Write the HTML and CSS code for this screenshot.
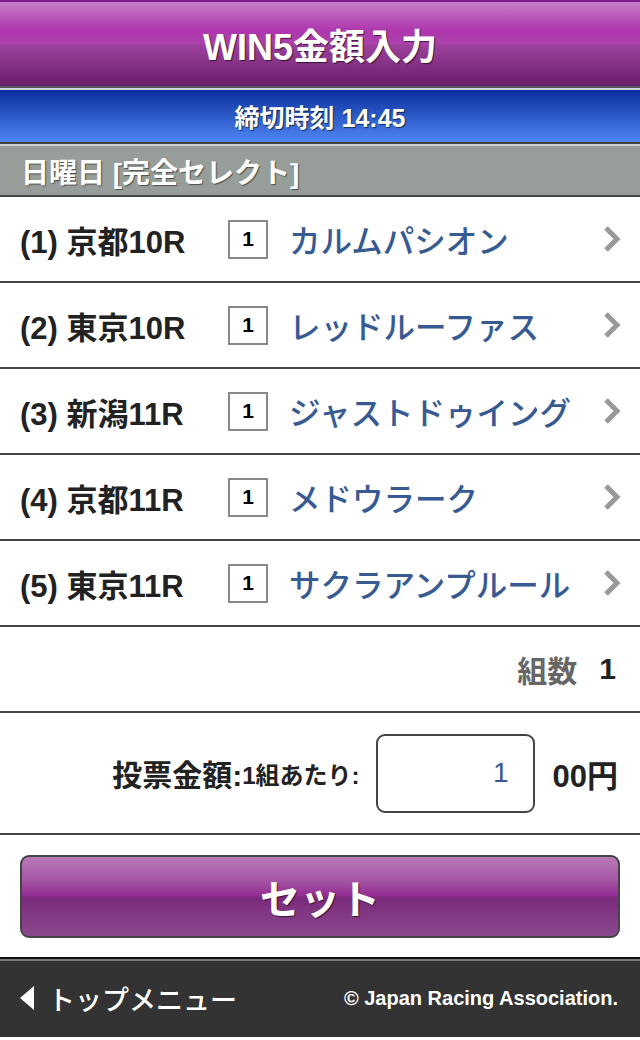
FILE: index.html
```html
<!DOCTYPE html>
<html lang="ja">
<head>
  <meta charset="UTF-8">
  <meta name="viewport" content="width=device-width, initial-scale=1.0">
  <title>WIN5金額入力</title>
  <link rel="stylesheet" href="styles.css">
</head>
<body>
  <header class="title-bar">
    <h1>WIN5金額入力</h1>
  </header>
  <div class="deadline">締切時刻 14:45</div>
  <div class="day-bar">日曜日 [完全セレクト]</div>

  <ul class="races">
    <li class="race">
      <span class="race-label">(1) 京都10R</span>
      <span class="pick">1</span>
      <span class="horse">カルムパシオン</span>
      <svg class="chev" width="20" height="28" viewBox="0 0 20 28"><polyline points="4,3 15,14 4,25" /></svg>
    </li>
    <li class="race">
      <span class="race-label">(2) 東京10R</span>
      <span class="pick">1</span>
      <span class="horse">レッドルーファス</span>
      <svg class="chev" width="20" height="28" viewBox="0 0 20 28"><polyline points="4,3 15,14 4,25" /></svg>
    </li>
    <li class="race">
      <span class="race-label">(3) 新潟11R</span>
      <span class="pick">1</span>
      <span class="horse">ジャストドゥイング</span>
      <svg class="chev" width="20" height="28" viewBox="0 0 20 28"><polyline points="4,3 15,14 4,25" /></svg>
    </li>
    <li class="race">
      <span class="race-label">(4) 京都11R</span>
      <span class="pick">1</span>
      <span class="horse">メドウラーク</span>
      <svg class="chev" width="20" height="28" viewBox="0 0 20 28"><polyline points="4,3 15,14 4,25" /></svg>
    </li>
    <li class="race">
      <span class="race-label">(5) 東京11R</span>
      <span class="pick">1</span>
      <span class="horse">サクラアンプルール</span>
      <svg class="chev" width="20" height="28" viewBox="0 0 20 28"><polyline points="4,3 15,14 4,25" /></svg>
    </li>
  </ul>

  <div class="count-row">
    <span class="count-label">組数</span>
    <span class="count-value">1</span>
  </div>

  <div class="amount-row">
    <span class="amount-label">投票金額:</span><span class="amount-sub">1組あたり:</span>
    <input class="amount-input" type="text" value="1">
    <span class="amount-unit">00円</span>
  </div>

  <div class="set-area">
    <button class="set-button">セット</button>
  </div>

  <footer class="footer">
    <span class="back"><span class="back-arrow"></span>トップメニュー</span>
    <span class="copy">© Japan Racing Association.</span>
  </footer>
</body>
</html>
```

FILE: styles.css
```css
body {
  margin: 0;
  width: 640px;
  font-family: "Liberation Sans", "Noto Sans CJK JP", sans-serif;
  font-weight: bold;
  background: #fff;
  color: #222;
}
.title-bar {
  height: 84px;
  border-top: 2px solid #7b1a86;
  border-bottom: 2px solid #555;
  background: linear-gradient(#c97dc9 0%, #ae36ae 34%, #ab42ab 50%, #9d419d 51%, #6a1e6a 100%);
  display: flex;
  align-items: center;
  justify-content: center;
}
.title-bar h1 {
  margin: 0;
  color: #fff;
  font-size: 36px;
  text-shadow: 1px 1px 1px rgba(0, 0, 0, 0.6);
}
.deadline {
  height: 52px;
  border-top: 2px solid #cfd6e4;
  border-bottom: 2px solid #444;
  background: linear-gradient(#0a2f9c, #4f86f4);
  color: #fff;
  font-size: 25px;
  display: flex;
  align-items: center;
  justify-content: center;
  text-shadow: 1px 1px 1px rgba(0, 0, 0, 0.6);
}
.day-bar {
  height: 49px;
  border-top: 2px solid #d0d6d2;
  border-bottom: 2px solid #444;
  background: #979e99;
  color: #fff;
  font-size: 28px;
  padding-left: 21px;
  display: flex;
  align-items: center;
  text-shadow: 1px 1px 1px rgba(0, 0, 0, 0.5);
}
.races {
  list-style: none;
  margin: 0;
  padding: 0;
}
.race {
  height: 84px;
  border-bottom: 2px solid #444;
  display: flex;
  align-items: center;
  padding: 0 20px;
  font-size: 31px;
}
.race-label {
  width: 208px;
  color: #222;
}
.pick {
  width: 36px;
  height: 35px;
  border: 2px solid #888;
  display: flex;
  align-items: center;
  justify-content: center;
  font-size: 21px;
  color: #000;
}
.horse {
  margin-left: 21px;
  flex: 1;
  color: #375a92;
  font-size: 31.5px;
  font-weight: 500;
}
.chev {
  margin-right: -2px;
}
.chev polyline {
  fill: none;
  stroke: #999;
  stroke-width: 5;
}
.count-row {
  height: 84px;
  border-bottom: 2px solid #444;
  display: flex;
  align-items: center;
  justify-content: flex-end;
  padding-right: 24px;
  font-size: 30px;
}
.count-label {
  color: #666;
  margin-right: 22px;
}
.count-value {
  color: #222;
}
.amount-row {
  height: 120px;
  border-bottom: 2px solid #444;
  display: flex;
  align-items: center;
  justify-content: flex-end;
  padding-right: 22px;
}
.amount-label {
  font-size: 30px;
}
.amount-sub {
  font-size: 24px;
  margin-right: 16px;
}
.amount-input {
  box-sizing: border-box;
  width: 159px;
  height: 79px;
  border: 2px solid #444;
  border-radius: 9px;
  text-align: right;
  padding: 0 24px 0 0;
  font-family: "Liberation Sans", sans-serif;
  font-size: 28px;
  color: #375a92;
  margin-right: 18px;
}
.amount-unit {
  font-size: 31px;
}
.set-area {
  height: 122px;
  padding: 20px;
  box-sizing: border-box;
}
.set-button {
  width: 100%;
  height: 83px;
  border: 2px solid #444;
  border-radius: 9px;
  background: linear-gradient(#b77ab7 0%, #a456a4 30%, #962e96 48%, #7b2a7b 52%, #8b4a8f 100%);
  color: #fff;
  font-family: "Liberation Sans", "Noto Sans CJK JP", sans-serif;
  font-weight: bold;
  font-size: 40px;
  text-shadow: 1px 1px 1px rgba(0, 0, 0, 0.6);
  cursor: pointer;
}
.footer {
  height: 78px;
  border-top: 2px solid #111;
  box-shadow: inset 0 2px 0 #7a7a7a;
  background: #333;
  color: #fff;
  display: flex;
  align-items: center;
  justify-content: space-between;
  padding: 0 22px 0 20px;
}
.back {
  display: flex;
  align-items: center;
  font-size: 27px;
  font-weight: 500;
}
.back-arrow {
  width: 0;
  height: 0;
  border-top: 12px solid transparent;
  border-bottom: 12px solid transparent;
  border-right: 14px solid #fff;
  margin-right: 14px;
}
.copy {
  font-size: 20px;
}
```
